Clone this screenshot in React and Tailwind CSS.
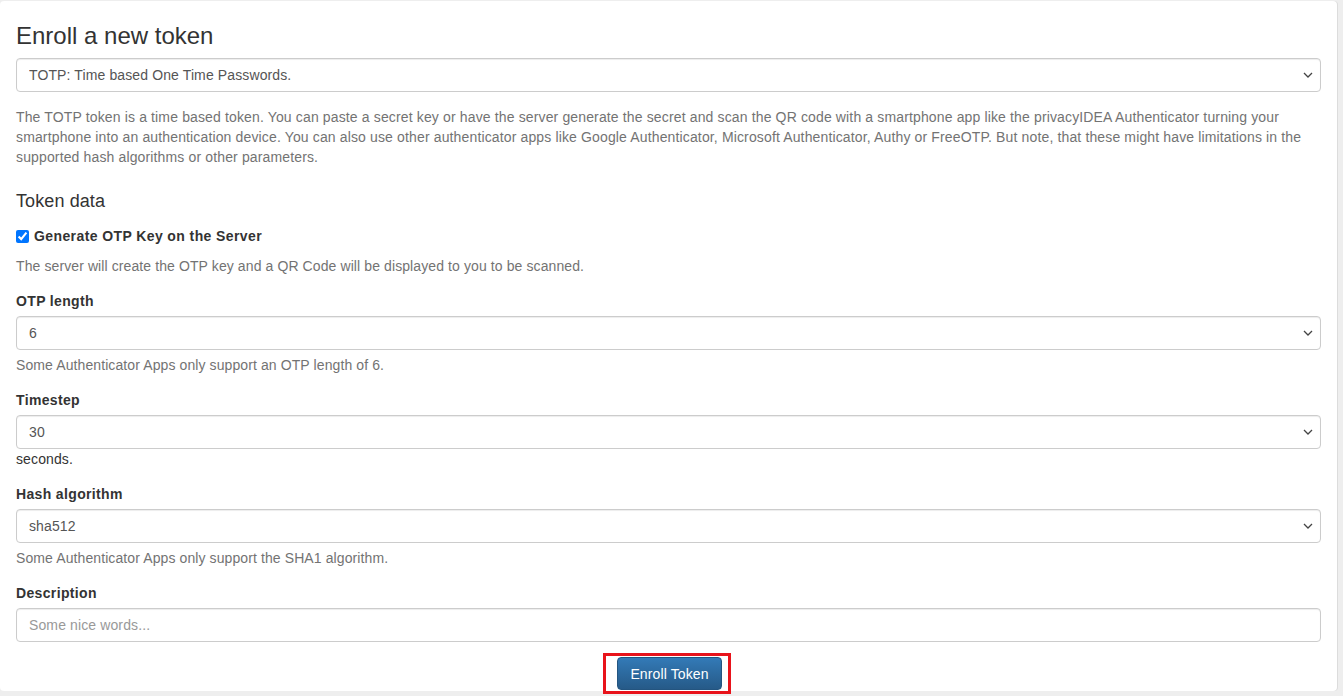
import React from 'react';

const Chevron = () => (
  <svg
    className="pointer-events-none absolute right-[8px] top-1/2 -translate-y-1/2"
    width="10"
    height="6"
    viewBox="0 0 10 6"
    fill="none"
  >
    <path d="M1 1l4 4 4-4" stroke="#444" strokeWidth="1.3" />
  </svg>
);

const Select = ({ value, className = '' }) => (
  <div className={`relative ${className}`}>
    <select
      defaultValue={value}
      className="block w-full h-[34px] appearance-none rounded-[4px] border border-[#cccccc] bg-white pl-[12px] pr-8 text-[14px] tracking-[0.12px] text-[#555555] shadow-[inset_0_1px_1px_rgba(0,0,0,0.075)] outline-none"
    >
      <option value={value}>{value}</option>
    </select>
    <Chevron />
  </div>
);

const Label = ({ children, className = '' }) => (
  <label className={`block text-[14px] leading-[20px] font-bold tracking-[0.35px] text-[#333333] ${className}`}>
    {children}
  </label>
);

const Help = ({ children, className = 'tracking-[0.1px]' }) => (
  <p className={`text-[14px] leading-[20px] text-[#737373] ${className}`}>{children}</p>
);

export default function App() {
  return (
    <div
      className="h-[696px] overflow-hidden bg-[#eeeeee] pt-px"
      style={{ fontFamily: '"Liberation Sans", Arial, sans-serif' }}
    >
      <div className="h-[690px] w-[1337px] rounded-[4px] bg-white px-[16px] pt-[21px] text-[#333333] shadow-[1px_0_0_#dcdcdc]">
        <h2 className="pt-px text-[24px] leading-[25px] font-normal">Enroll a new token</h2>

        <Select value="TOTP: Time based One Time Passwords." className="mt-[10px]" />

        <Help className="mt-[15px] tracking-[0.14px]">
          The TOTP token is a time based token. You can paste a secret key or have the server generate the secret and
          scan the QR code with a smartphone app like the privacyIDEA Authenticator turning your smartphone into an
          authentication device. You can also use other authenticator apps like Google Authenticator, Microsoft
          Authenticator, Authy or FreeOTP. But note, that these might have limitations in the supported hash algorithms
          or other parameters.
        </Help>

        <h4 className="mt-[24px] text-[18px] leading-[20px] font-normal tracking-[0.1px]">Token data</h4>

        <label className="mt-[15px] flex items-center text-[14px] leading-[20px] font-bold tracking-[0.4px]">
          <input
            type="checkbox"
            defaultChecked
            className="m-0 mr-[5px] h-[13px] w-[13px] accent-[#0075ff]"
          />
          Generate OTP Key on the Server
        </label>
        <Help className="mt-[10px] tracking-[0.1px]">The server will create the OTP key and a QR Code will be displayed to you to be scanned.</Help>

        <Label className="mt-[15px]">OTP length</Label>
        <Select value="6" className="mt-[5px]" />
        <Help className="mt-[5px] tracking-[0.1px]">Some Authenticator Apps only support an OTP length of 6.</Help>

        <Label className="mt-[15px]">Timestep</Label>
        <Select value="30" className="mt-[5px]" />
        <p className="text-[14px] leading-[20px] tracking-[0.12px]">seconds.</p>

        <Label className="mt-[15px]">Hash algorithm</Label>
        <Select value="sha512" className="mt-[5px]" />
        <Help className="mt-[5px] tracking-[0.1px]">Some Authenticator Apps only support the SHA1 algorithm.</Help>

        <Label className="mt-[15px]">Description</Label>
        <input
          type="text"
          placeholder="Some nice words..."
          className="mt-[5px] block h-[34px] w-full rounded-[4px] border border-[#cccccc] px-[12px] text-[14px] tracking-[0.12px] text-[#555555] shadow-[inset_0_1px_1px_rgba(0,0,0,0.075)] outline-none placeholder:text-[#999999]"
        />

        <div className="mt-[11px] flex justify-center">
          <div className="-ml-[3px] border-[3px] border-[#e8131b] py-px pl-[11px] pr-[6px]">
            <button
              type="button"
              className="block h-[33px] rounded-[4px] border border-[#245580] bg-gradient-to-b from-[#337ab7] to-[#265a88] px-[12px] text-[14px] leading-[20px] tracking-[0.12px] text-white"
            >
              Enroll Token
            </button>
          </div>
        </div>
      </div>
    </div>
  );
}
